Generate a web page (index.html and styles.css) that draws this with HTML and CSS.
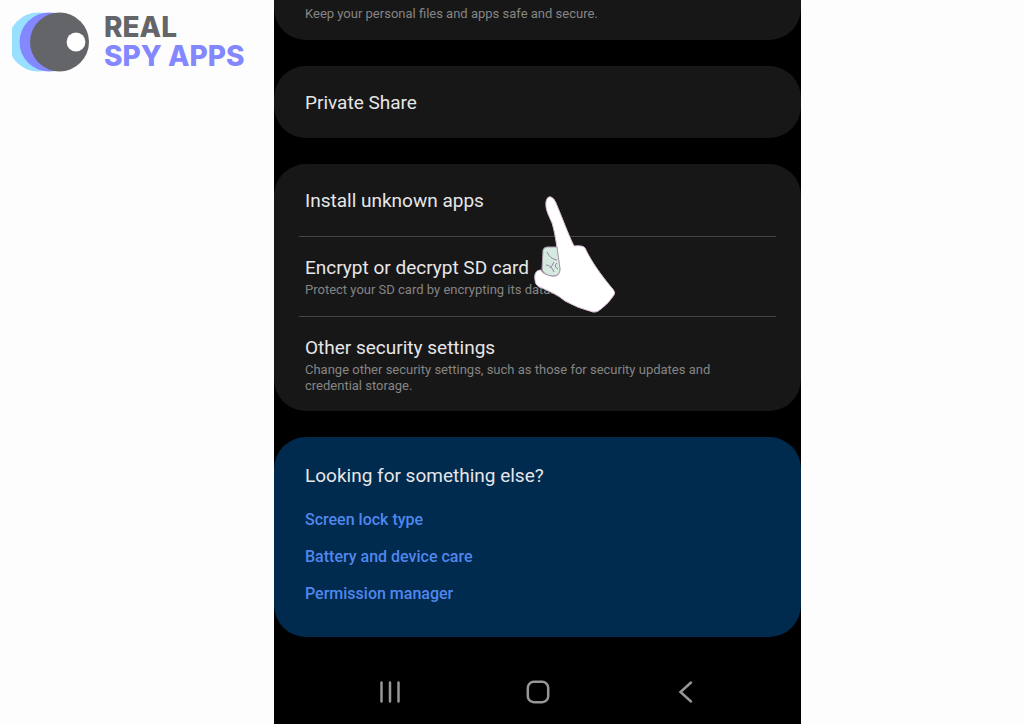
FILE: index.html
```html
<!DOCTYPE html>
<html lang="en">
<head>
<meta charset="utf-8">
<meta name="viewport" content="width=device-width, initial-scale=1">
<title>Install unknown apps</title>
<link rel="stylesheet" href="styles.css">
</head>
<body>
<div class="page">
  <header class="brand">
    <svg class="brand-mark" viewBox="0 0 78 60" aria-hidden="true">
      <circle cx="26" cy="30" r="29.5" fill="#99dfff"/>
      <circle cx="37" cy="30" r="29.5" fill="#8388ff"/>
      <circle cx="47.5" cy="30" r="29.5" fill="#646569"/>
      <circle cx="64" cy="30" r="9.4" fill="#fff"/>
    </svg>
    <div class="brand-name">
      <span>REAL</span>
      <span class="brand-accent">SPY APPS</span>
    </div>
  </header>
  <main class="phone">
    <section class="card card-top">
      <p class="note">Keep your personal files and apps safe and secure.</p>
    </section>
    <section class="card">
      <div class="row row-single"><h2 class="title">Private Share</h2></div>
    </section>
    <section class="card">
      <div class="row row-single"><h2 class="title">Install unknown apps</h2></div>
      <div class="row row-lined">
        <h2 class="title">Encrypt or decrypt SD card</h2>
        <p class="note">Protect your SD card by encrypting its data.</p>
      </div>
      <div class="row row-lined">
        <h2 class="title">Other security settings</h2>
        <p class="note">Change other security settings, such as those for security updates and credential storage.</p>
      </div>
      <svg class="hand" viewBox="530 190 90 125" aria-hidden="true">
        <path d="M551 196Q547 195 546 201C545 208 549 215 552 222C556 235 557 249 560 268C560 274 556 276 551 275C546 274 542 272 541 269C536 269 534 273 535 279Q535 285 542 287C549 290 558 294 565 300Q577 307 593 311Q597 312 601 308Q609 302 614 294Q616 291 611 286C602 275 592 262 585 247Q583 244 574 245C568 233 562 216 556 202Q554 197 551 196Z" fill="#fff" stroke="#d9bdd8" stroke-width="1"/>
        <path d="M543 249Q544 246 547 246H557L560 268Q560 275 553 275Q543 274 542 268Z" fill="#d5e9e1" stroke="#a998ab" stroke-width="1"/>
        <path d="M547 251Q550 258 557 259M546 264Q551 264 554 271M554 261Q552 265 550 267M557 262Q553 265 558 268" fill="none" stroke="#94849b" stroke-width="1"/>
      </svg>
    </section>
    <section class="card card-blue">
      <h2 class="title">Looking for something else?</h2>
      <nav class="links">
        <a href="#lock">Screen lock type</a>
        <a href="#care">Battery and device care</a>
        <a href="#permissions">Permission manager</a>
      </nav>
    </section>
    <footer class="navbar">
      <button type="button" aria-label="Recent apps"><svg viewBox="0 0 24 24"><path d="M3.5 2.5v19M12 2.5v19M20.500 2.5v19"/></svg></button>
      <button type="button" aria-label="Home"><svg viewBox="0 0 24 24"><rect x="1.800" y="1.800" width="20.400" height="20.400" rx="6"/></svg></button>
      <button type="button" aria-label="Back"><svg viewBox="0 0 24 24"><path d="M17 2.500L6.500 12L17 21.500"/></svg></button>
    </footer>
  </main>
</div>
</body>
</html>
```
FILE: styles.css
```css
* { box-sizing: border-box; }

body {
  margin: 0;
  background: #fdfdfd;
  font-family: Roboto, "Liberation Sans", sans-serif;
}

.page {
  display: grid;
  grid-template-columns: 274fr 527fr 223fr;
  min-height: 100vh;
}

.brand {
  display: flex;
  align-items: center;
  align-self: start;
  gap: 14px;
  padding: 12px 0 0 12px;
}

.brand-mark {
  width: 78px;
  height: 60px;
  flex: none;
}

.brand-name {
  display: flex;
  flex-direction: column;
  font: 800 28px/29px Inter, sans-serif;
  color: #646569;
  white-space: nowrap;
}

.brand-accent { color: #8388ff; }

.phone {
  grid-column: 2;
  display: flex;
  flex-direction: column;
  gap: 26px;
  background: #000;
}

.card {
  position: relative;
  border-radius: 32px;
  background: #171717;
  color: #e6e6e8;
}

.card-top {
  padding: 6px 31px 18px;
  border-radius: 0 0 32px 32px;
}

.row {
  margin: 0 25px;
  padding: 19px 6px 18px;
}

.row-single { padding: 25px 6px 23px; }

.row-lined { border-top: 1px solid #444; }

.row-lined:last-of-type { padding-bottom: 17px; }

.title {
  margin: 0;
  font-size: 19px;
  line-height: 24px;
  font-weight: 400;
}

.note {
  max-width: 440px;
  margin: 2px 0 0;
  font-size: 13px;
  line-height: 16px;
  color: #858585;
}

.card-top .note { margin: 0; }

.hand {
  position: absolute;
  left: 256px;
  top: 27px;
  width: 90px;
  height: 125px;
}

.card-blue {
  padding: 27px 31px 33px;
  background: #002a4e;
}

.links {
  display: flex;
  flex-direction: column;
  align-items: flex-start;
  gap: 17px;
  margin-top: 22px;
}

.links a {
  font-size: 16px;
  line-height: 20px;
  font-weight: 500;
  color: #5087ed;
  text-decoration: none;
}

.navbar {
  display: flex;
  justify-content: center;
  gap: 108px;
  padding: 9px 0;
}

.navbar button {
  display: grid;
  place-items: center;
  width: 40px;
  height: 40px;
  padding: 0;
  border: 0;
  background: none;
}

.navbar svg {
  width: 24px;
  height: 24px;
  fill: none;
  stroke: #969696;
  stroke-width: 2.5;
  stroke-linecap: round;
}
```
